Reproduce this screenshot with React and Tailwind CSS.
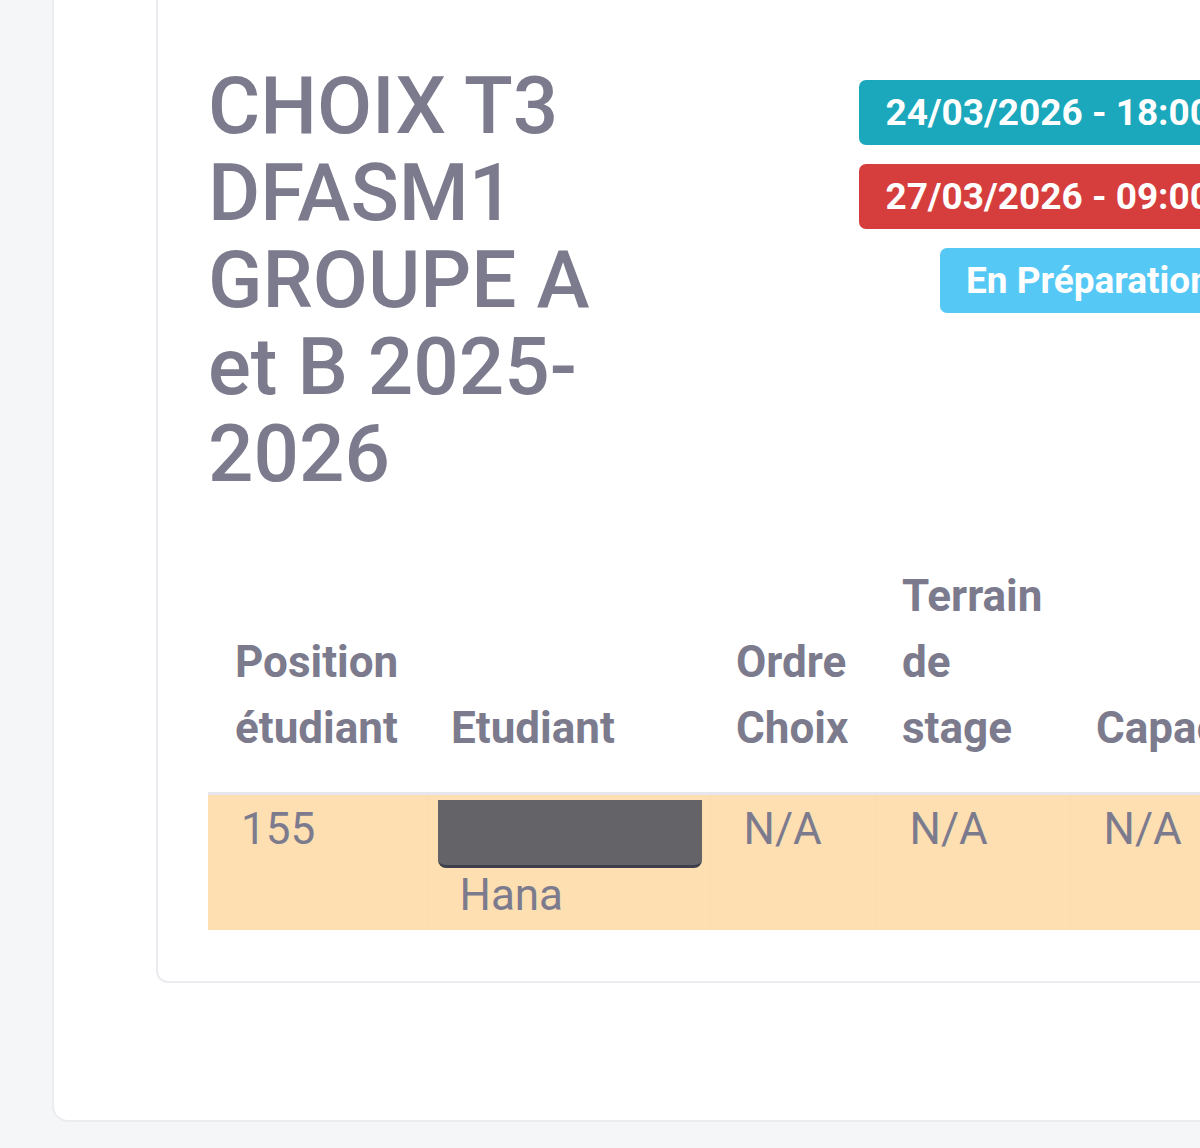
import React from "react";

const BADGES = [
  { label: "24/03/2026 - 18:00", color: "bg-[#1ba8bc]" },
  { label: "27/03/2026 - 09:00", color: "bg-[#d63e3e]" },
  { label: "En Préparation", color: "bg-[#56c8f6]" },
];

const HEADERS = [
  { lines: ["Position", "étudiant"], w: "w-[220px]", pl: "pl-[27px]" },
  { lines: ["Etudiant"], w: "w-[282px]", pl: "pl-[23px]" },
  { lines: ["Ordre", "Choix"], w: "w-[166px]", pl: "pl-[26px]" },
  { lines: ["Terrain", "de", "stage"], w: "w-[194px]", pl: "pl-[26px]" },
  { lines: ["Capacité"], w: "w-[260px]", pl: "pl-[26px]" },
];

export default function App() {
  return (
    <div className="w-[1200px] h-[1148px] overflow-hidden bg-[#f5f6f8] font-['Roboto',sans-serif] text-[#7c7b8e]">
      {/* Carte extérieure */}
      <div className="ml-[52px] w-[1400px] h-[1122px] bg-white border-2 border-t-0 border-[#ebecef] rounded-bl-[16px] pl-[102px]">
        {/* Carte intérieure */}
        <div className="w-[1130px] bg-white border-2 border-t-0 border-[#ebecef] rounded-bl-[12px] pl-[50px] pr-[47px] pt-[63px] pb-[51px]">
          {/* En-tête */}
          <div className="flex items-start">
            <h1 className="w-[420px] text-[80px] leading-[87px] font-medium">
              CHOIX T3
              <br />
              DFASM1
              <br />
              GROUPE A
              <br />
              et B 2025-
              <br />
              2026
            </h1>
            <div className="ml-auto mt-[17px] flex flex-col items-end gap-[19px]">
              {BADGES.map((b) => (
                <span
                  key={b.label}
                  className={`${b.color} h-[65px] px-[26px] rounded-[7px] flex items-center text-white text-[37px] font-bold leading-none whitespace-nowrap`}
                >
                  {b.label}
                </span>
              ))}
            </div>
          </div>

          {/* Tableau */}
          <table className="mt-[65px] table-fixed border-collapse w-[1122px]">
            <thead>
              <tr className="border-b-[3px] border-[#e6e6ec]">
                {HEADERS.map((h, i) => (
                  <th
                    key={i}
                    className={`${h.w} ${h.pl} text-left align-bottom font-bold text-[44px] leading-[66px] pr-[20px] pb-[31px] whitespace-nowrap`}
                  >
                    {h.lines.map((l, j) => (
                      <div key={j}>{l}</div>
                    ))}
                  </th>
                ))}
              </tr>
            </thead>
            <tbody>
              <tr className="bg-[#fddfb2]">
                <td className="align-top text-[44px] leading-[66px] pl-[33px] pt-[1px] pb-[2px] border-r border-[#fbdaab]">
                  155
                </td>
                <td className="relative align-top text-[44px] leading-[66px] pl-[31px] pt-[1px] pb-[2px] border-r border-[#fbdaab]">
                  <div>&nbsp;</div>
                  <div>Hana</div>
                  <div className="absolute left-[9px] top-[5px] w-[264px] h-[68px] bg-[#636368] rounded-b-[8px] border-b-[3px] border-[#3d3f4c]" />
                </td>
                <td className="align-top text-[44px] leading-[66px] pl-[33px] pt-[1px] pb-[2px] border-r border-[#fbdaab]">
                  N/A
                </td>
                <td className="align-top text-[44px] leading-[66px] pl-[33px] pt-[1px] pb-[2px] border-r border-[#fbdaab]">
                  N/A
                </td>
                <td className="align-top text-[44px] leading-[66px] pl-[33px] pt-[1px] pb-[2px]">
                  N/A
                </td>
              </tr>
            </tbody>
          </table>
        </div>
      </div>
    </div>
  );
}
